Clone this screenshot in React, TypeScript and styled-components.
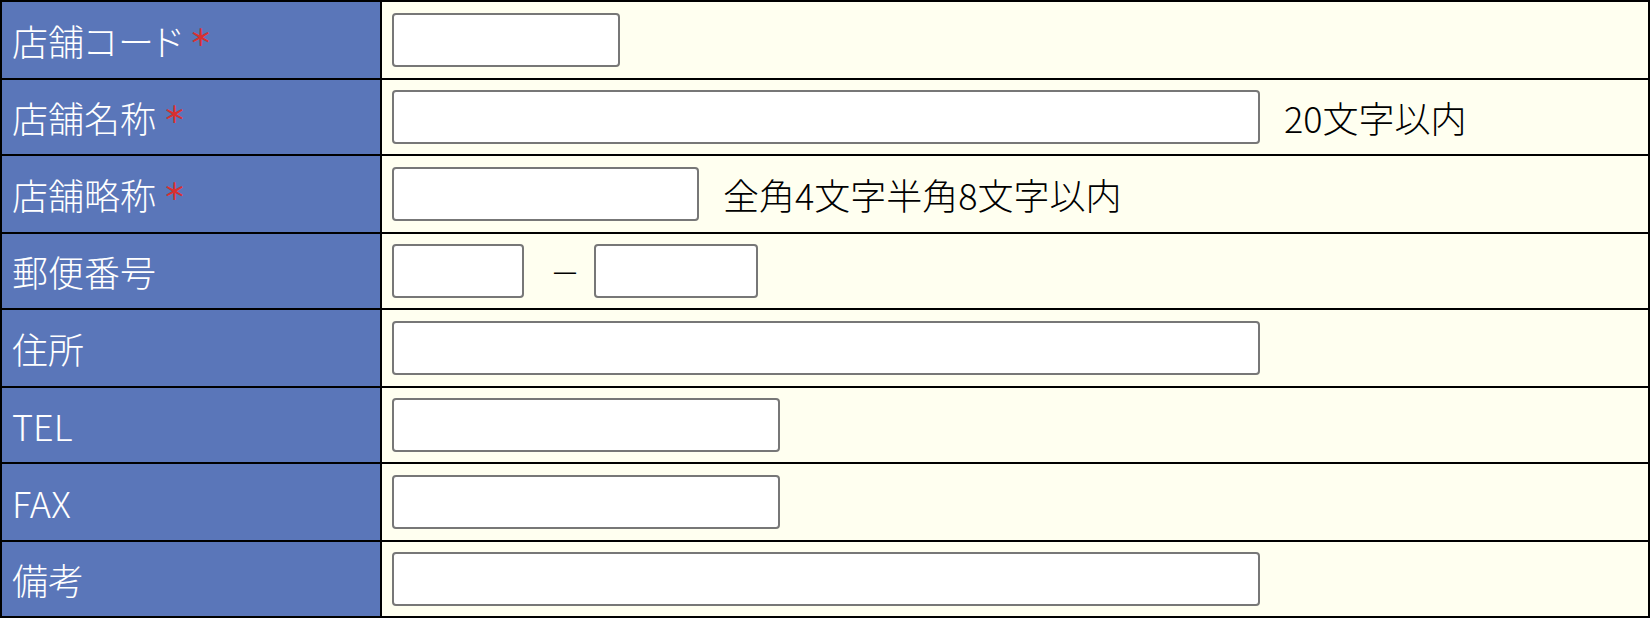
import React from 'react';
import styled, { createGlobalStyle } from 'styled-components';

const GlobalStyle = createGlobalStyle`
  html, body {
    margin: 0;
    padding: 0;
    background: #fffff0;
  }
  body {
    font-family: "Noto Sans CJK JP", "Noto Sans", sans-serif;
    font-weight: 300;
  }
`;

const Form = styled.div`
  display: grid;
  grid-template-columns: 378px 1fr;
  grid-template-rows: repeat(4, 76px 74px);
  gap: 2px;
  padding: 2px;
  width: 1650px;
  box-sizing: border-box;
  background: #000;
`;

const Label = styled.div`
  display: flex;
  align-items: center;
  padding-left: 10px;
  background: #5a76b9;
  color: #fff;
  font-size: 36px;
  line-height: 1;
  font-feature-settings: "palt";
`;

const Required = styled.span`
  margin-left: 7px;
  margin-bottom: 8px;
  color: #d83030;
  font-size: 23px;
  font-weight: 700;
  font-feature-settings: normal;
`;

const Value = styled.div`
  display: flex;
  align-items: center;
  gap: 24px;
  padding-left: 10px;
  background: #fffff0;
  color: #000;
  font-size: 36px;
  line-height: 1;
`;

const TextInput = styled.input<{ $w: number }>`
  width: ${p => p.$w}px;
  height: 54px;
  box-sizing: border-box;
  margin: 0;
  padding: 0 8px;
  border: 2px solid #777;
  border-radius: 4px;
  background: #fff;
  font-family: inherit;
  font-size: 28px;
  outline: none;
`;

const Note = styled.span`
  white-space: nowrap;
`;

const PostalGroup = styled.div`
  display: flex;
  align-items: center;
`;

const Dash = styled.span`
  width: 70px;
  padding-left: 12px;
  box-sizing: border-box;
  text-align: center;
  font-size: 30px;
`;

interface FieldDef {
  label: string;
  required?: boolean;
  width: number;
  note?: string;
}

const fields: FieldDef[] = [
  { label: '店舗コード', required: true, width: 228 },
  { label: '店舗名称', required: true, width: 868, note: '20文字以内' },
  { label: '店舗略称', required: true, width: 307, note: '全角4文字半角8文字以内' },
  { label: '郵便番号', width: 0 },
  { label: '住所', width: 868 },
  { label: 'TEL', width: 388 },
  { label: 'FAX', width: 388 },
  { label: '備考', width: 868 },
];

const App: React.FC = () => {
  return (
    <>
      <GlobalStyle />
      <Form>
        {fields.map(f => (
          <React.Fragment key={f.label}>
            <Label>
              {f.label}
              {f.required && <Required>＊</Required>}
            </Label>
            <Value>
              {f.label === '郵便番号' ? (
                <PostalGroup>
                  <TextInput $w={132} />
                  <Dash>－</Dash>
                  <TextInput $w={164} />
                </PostalGroup>
              ) : (
                <TextInput $w={f.width} />
              )}
              {f.note && <Note>{f.note}</Note>}
            </Value>
          </React.Fragment>
        ))}
      </Form>
    </>
  );
};

export default App;
